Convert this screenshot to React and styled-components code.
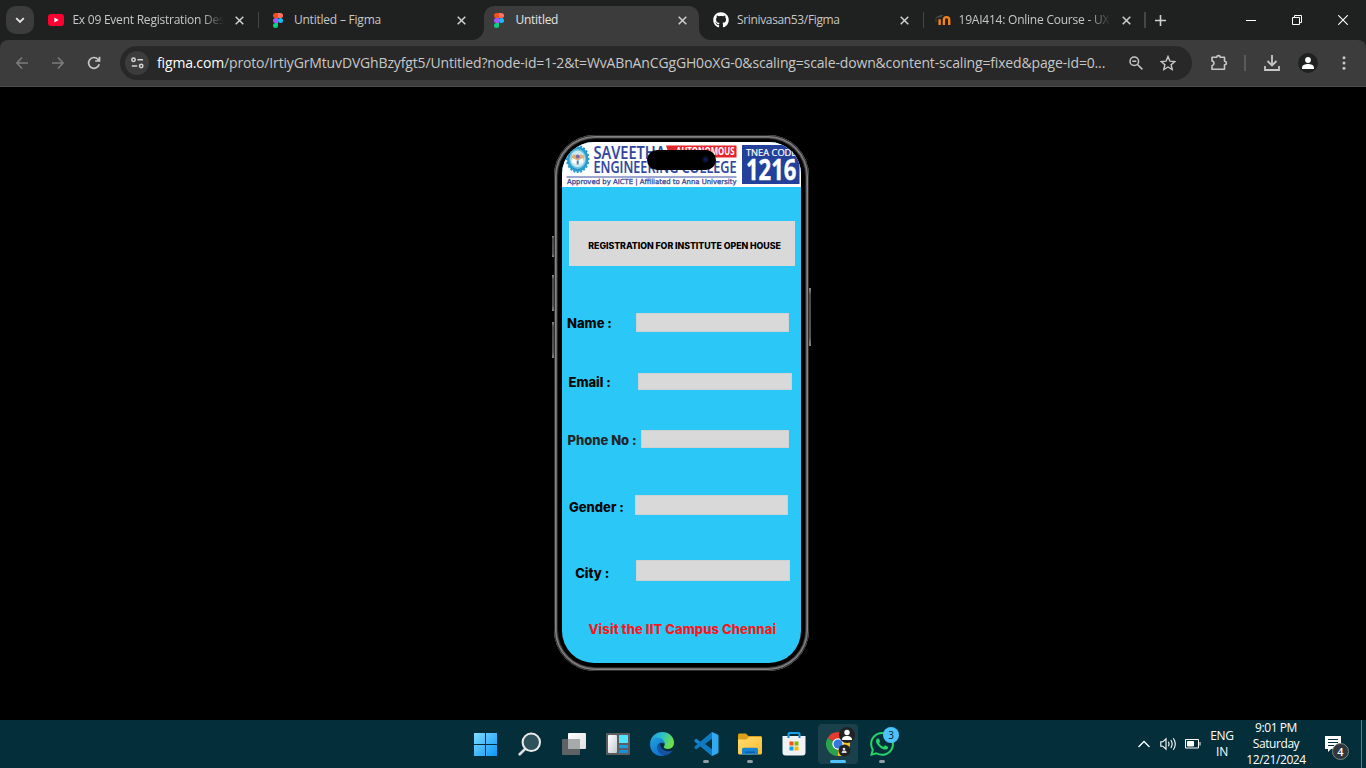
import React from 'react';
import styled, { createGlobalStyle } from 'styled-components';
import { FaGithub } from 'react-icons/fa';

const ui = `"Open Sans", "Noto Sans", sans-serif`;

const Global = createGlobalStyle`
  * { box-sizing: border-box; }
  body { margin: 0; background: #000; font-family: ${ui}; overflow: hidden; }
  svg { display: block; flex: none; }
`;

const Desktop = styled.div`
  width: 1366px;
  height: 768px;
  display: flex;
  flex-direction: column;
  background: #000;
`;

/* ---------- tab strip ---------- */
const TabStrip = styled.div`
  height: 40px;
  display: flex;
  align-items: center;
  padding-left: 6px;
  background: #1f2120;
`;

const TabSearch = styled.div`
  width: 28px;
  height: 28px;
  margin-right: 6.4px;
  border-radius: 10px;
  background: #3c3c3c;
  display: grid;
  place-items: center;
`;

const Tab = styled.div`
  position: relative;
  width: 215px;
  height: 40px;
  display: flex;
  align-items: center;
  padding-left: 8px;
  color: ${(p) => (p.$active ? '#e3e3e3' : '#c7c7c7')};
`;

const ActiveShape = styled.svg`
  position: absolute;
  left: -11.5px;
  top: 0;
`;

const Favicon = styled.div`
  position: relative;
  width: 16px;
  height: 16px;
  display: grid;
  place-items: center;
  margin-right: 8px;
`;

const TabTitle = styled.div`
  position: relative;
  width: 152px;
  height: 18px;
  line-height: 18px;
  font-size: 12px;
  letter-spacing: ${(p) => p.$track || 0}px;
  white-space: nowrap;
  overflow: hidden;
  ${(p) => p.$fade && 'mask-image: linear-gradient(90deg, #000 130px, transparent 152px);'}
`;

const TabClose = styled.div`
  position: relative;
  width: 16px;
  height: 16px;
  margin-left: 7.5px;
  display: grid;
  place-items: center;
`;

const TabGap = styled.div`
  width: 6.55px;
  height: 16px;
  display: flex;
  justify-content: center;
  flex: none;
  &::before {
    content: '';
    width: 1.5px;
    background: ${(p) => (p.$line ? '#454746' : 'transparent')};
  }
`;

const NewTab = styled.div`
  width: 28px;
  margin-left: -1.5px;
  display: grid;
  place-items: center;
`;

const WindowControls = styled.div`
  margin-left: auto;
  display: flex;
`;

const WindowButton = styled.div`
  width: 46px;
  height: 40px;
  display: grid;
  place-items: center;
`;

/* ---------- toolbar ---------- */
const ToolbarBack = styled.div`
  background: #1f2120;
`;

const Toolbar = styled.div`
  height: 47px;
  display: flex;
  align-items: center;
  padding: 0 0 0 5px;
  background: #3c3c3c;
  border-bottom: 1px solid #4b4b4b;
  border-radius: 8px 8px 0 0;
`;

const ToolButton = styled.div`
  width: ${(p) => p.$w || 36}px;
  height: 34px;
  flex: none;
  display: grid;
  place-items: center;
`;

const NavButton = styled(ToolButton)`
  margin-left: -1px;
  margin-right: 1px;
`;

const AddressBar = styled.div`
  width: 1072px;
  height: 34px;
  flex: none;
  margin-left: 7px;
  padding: 0 8px 0 5px;
  border-radius: 17px;
  background: #282828;
  display: flex;
  align-items: center;
`;

const SiteInfo = styled.div`
  width: 24px;
  height: 24px;
  flex: none;
  border-radius: 50%;
  background: #3c3c3c;
  display: grid;
  place-items: center;
`;

const Url = styled.div`
  width: 963px;
  flex: none;
  margin-left: 8px;
  font-size: 14px;
  line-height: 20px;
  letter-spacing: -0.152px;
  white-space: nowrap;
  color: #c7c7c7;
`;

const UrlHost = styled.span`
  color: #fff;
`;

const ToolDivider = styled.div`
  width: 2px;
  height: 16px;
  margin: 0 8px 0 -1px;
  background: #5a5a5a;
`;

const Avatar = styled.div`
  width: 20px;
  height: 20px;
  border-radius: 50%;
  background: #1f2120;
  display: grid;
  place-items: center;
`;

/* ---------- prototype ---------- */
const Stage = styled.main`
  height: 633px;
  display: flex;
  justify-content: center;
  padding: 48px 3px 0 0;
  background: #000;
`;

const Phone = styled.div`
  position: relative;
  width: 255px;
  height: 536px;
  padding: 7px 8px 8px;
  border-radius: 41px;
  background: #000;
  box-shadow: inset 0 0 0 1px #2e2e2e, inset 0 0 0 2px #858585, inset 0 0 0 3px #686868, inset 0 0 0 4px #262626;
`;

const SideKey = styled.i`
  position: absolute;
  ${(p) => p.$side}: -2px;
  top: ${(p) => p.$top}px;
  width: 2px;
  height: ${(p) => p.$h}px;
  background: linear-gradient(#888, #4a4a4a 12%, #555 85%, #888);
`;

const Screen = styled.div`
  width: 239px;
  height: 521px;
  border-radius: 32px;
  overflow: hidden;
  background: #2bc8f7;
  font-family: Inter, sans-serif;
  font-weight: 700;
`;

const Banner = styled.div`
  position: relative;
  height: 45px;
  background: #fff;
`;

const Island = styled.div`
  position: absolute;
  left: 85px;
  top: 8px;
  width: 69px;
  height: 20px;
  border-radius: 10px;
  background: #000;
  &::after {
    content: '';
    position: absolute;
    right: 7px;
    top: 6px;
    width: 7px;
    height: 7px;
    border-radius: 50%;
    background: radial-gradient(#17206a, #05050f 75%);
  }
`;

const Heading = styled.h1`
  width: 226px;
  height: 44.5px;
  margin: 34px 0 0 7px;
  padding: 4.5px 0 0 19.3px;
  display: flex;
  align-items: center;
  background: #d9d9d9;
  font-size: 8.8px;
  font-weight: 800;
  letter-spacing: -0.045px;
  white-space: nowrap;
`;

const Field = styled.label`
  height: ${(p) => p.$h}px;
  margin-top: ${(p) => p.$gap}px;
  padding-left: ${(p) => p.$x}px;
  display: flex;
  align-items: center;
  color: ${(p) => p.$color || '#050505'};
  font-size: 13px;
  font-weight: 800;
  letter-spacing: -0.01px;
  white-space: nowrap;
`;

const FieldLabel = styled.span`
  width: ${(p) => p.$w}px;
  flex: none;
  padding-top: ${(p) => p.$drop || 0}px;
`;

const FieldBox = styled.span`
  width: ${(p) => p.$w}px;
  height: 100%;
  background: #d9d9d9;
  box-shadow: inset 0 0 0 0.5px #c4ccd0;
`;

const Footer = styled.p`
  margin: 39.5px 0 0 26.5px;
  font-size: 13px;
  font-weight: 800;
  line-height: 17px;
  letter-spacing: 0.08px;
  color: #f5191d;
  white-space: nowrap;
`;

/* ---------- taskbar ---------- */
const Taskbar = styled.footer`
  height: 48px;
  display: flex;
  padding-left: 464px;
  background: #042f3a;
  color: #fff;
`;

const TaskItem = styled.div`
  position: relative;
  width: 44px;
  height: 48px;
  display: grid;
  place-items: center;
  &::before {
    content: '';
    position: absolute;
    inset: 4px 2px;
    border-radius: 4px;
    background: ${(p) => (p.$active ? '#1a414b' : 'transparent')};
  }
  &::after {
    content: '';
    position: absolute;
    bottom: 5px;
    left: 50%;
    transform: translateX(-50%);
    width: ${(p) => (p.$active ? 16 : p.$running ? 6 : 0)}px;
    height: 3px;
    border-radius: 2px;
    background: ${(p) => (p.$active ? '#4cc2ff' : '#8e9ea4')};
  }
  svg { position: relative; }
`;

const CountBadge = styled.span`
  position: absolute;
  top: 7px;
  right: 5px;
  width: 16px;
  height: 16px;
  border-radius: 50%;
  background: #4cc2ff;
  color: #06222c;
  font-size: 10px;
  line-height: 16px;
  text-align: center;
`;

const Tray = styled.div`
  margin-left: auto;
  display: flex;
  align-items: center;
  font-size: 12px;
  text-align: center;
`;

const TrayIcon = styled.div`
  width: ${(p) => p.$w}px;
  display: grid;
  place-items: center;
`;

const TrayText = styled.div`
  width: ${(p) => p.$w}px;
  line-height: 16px;
  white-space: nowrap;
  letter-spacing: ${(p) => p.$track}px;
`;

const Notice = styled.div`
  position: relative;
  width: 48px;
  height: 48px;
  padding-right: 8px;
  display: grid;
  place-items: center;
`;

const NoticeCount = styled.span`
  position: absolute;
  left: 19px;
  top: 23px;
  width: 17px;
  height: 17px;
  border: 1px solid #7a858a;
  border-radius: 50%;
  background: #30373a;
  font-size: 11px;
  font-weight: 600;
  line-height: 15px;
`;

const ShowDesktop = styled.div`
  width: 5px;
  height: 48px;
  border-left: 1px solid #5d7a83;
`;

/* ---------- drawings ---------- */
const Cross = () => (
  <svg width="9" height="9" viewBox="0 0 9 9" stroke="#d0d0d0" strokeWidth="1.5">
    <path d="M.7.7l7.600 7.600M8.300.7L.7 8.300" />
  </svg>
);

const YouTube = () => (
  <svg width="16" height="12" viewBox="0 0 16 12">
    <rect width="16" height="12" rx="3" fill="#ff0033" />
    <path d="M6.400 3.500v5L10.600 6z" fill="#fff" />
  </svg>
);

const Figma = () => (
  <svg width="10" height="15" viewBox="0 0 10 15">
    <path d="M2.500 0H5v5H2.500a2.500 2.500 0 010-5z" fill="#f24e1e" />
    <path d="M5 0h2.500a2.500 2.500 0 010 5H5z" fill="#ff7262" />
    <path d="M2.500 5H5v5H2.500a2.500 2.500 0 010-5z" fill="#a259ff" />
    <circle cx="7.500" cy="7.500" r="2.500" fill="#1abcfe" />
    <path d="M2.500 10H5v2.500A2.500 2.500 0 112.500 10z" fill="#0acf83" />
  </svg>
);

const Moodle = () => (
  <svg width="16" height="12" viewBox="0 0 16 12" fill="none">
    <path d="M0 3.700L6 .8l2.500.6-3 2.200z" fill="#514b48" />
    <path d="M1 4v4" stroke="#61483a" strokeWidth=".8" />
    <path d="M4.600 11V5.200M8.900 11V5.800a2.600 2.600 0 015.300 0V11" stroke="#f58220" strokeWidth="2.400" />
  </svg>
);

const tabs = [
  { title: 'Ex 09 Event Registration Design', icon: <YouTube />, line: true, fade: true, track: -0.23 },
  { title: 'Untitled – Figma', icon: <Figma />, track: -0.22 },
  { title: 'Untitled', icon: <Figma />, active: true, track: -0.26 },
  { title: 'Srinivasan53/Figma', icon: <FaGithub size={16} color="#fff" />, line: true, track: -0.35 },
  { title: '19AI414: Online Course - UX Design', icon: <Moodle />, line: true, fade: true, track: -0.23 },
];

const fields = [
  { label: 'Name :', x: 5, w: 69, box: 153, h: 18.5, gap: 47.5, drop: 1 },
  { label: 'Email :', x: 6.5, w: 69.5, box: 153.5, h: 17.5, gap: 41, drop: 1 },
  { label: 'Phone No :', x: 5.5, w: 73.5, box: 148, h: 18, gap: 40, drop: 1, color: '#202427' },
  { label: 'Gender :', x: 7, w: 66, box: 153, h: 19.5, gap: 47, drop: 4 },
  { label: 'City :', x: 13.2, w: 60.8, box: 154, h: 21, gap: 45.5, drop: 5 },
];

const gearTeeth = Array.from({ length: 20 }, (_, i) => i * 18);

const CollegeBanner = () => (
  <svg width="239" height="45" viewBox="0 0 239 45">
    <g transform="translate(15.700 17)">
      <g transform="scale(.84 1)">
        {gearTeeth.map((a) => (
          <rect key={a} x="-1.200" y="-14" width="2.400" height="4" fill="#2c9ccb" transform={`rotate(${a})`} />
        ))}
        <circle r="12.600" fill="#2a9bcd" />
        <circle r="10" fill="#6fc6e0" />
      </g>
      <ellipse rx="7.300" ry="8.300" fill="#cfe9ee" />
      <path d="M-6.500-3.500l3.500-1 3 2 3-2 3.500 1v3.500l-3 4-3.500 2-3.500-2-3-4z" fill="#d9b27c" />
      <path d="M-5.500-1L0 1.500 5.500-1v4.500L0 6l-5.500-2.500z" fill="#fbfdfd" />
      <circle cy="-2.500" r="2" fill="#7f6ab0" />
      <path d="M-1 1.500h2v4h-2z" fill="#4a7fb8" />
    </g>
    <g fill="#2f469c" fontFamily="'Open Sans', sans-serif" fontWeight="600" stroke="#2f469c" strokeWidth=".15">
      <text x="31.500" y="17" fontSize="18" textLength="72" lengthAdjust="spacingAndGlyphs">SAVEETHA</text>
      <text x="31.500" y="31" fontSize="16.500" textLength="143" lengthAdjust="spacingAndGlyphs">ENGINEERING COLLEGE</text>
    </g>
    <path d="M104 3.500h70.500v12H108z" fill="#e4252b" />
    <text x="114" y="13.300" fill="#fff" fontFamily="'Open Sans', sans-serif" fontWeight="700" fontSize="10" textLength="58.500" lengthAdjust="spacingAndGlyphs">AUTONOMOUS</text>
    <rect x="4.500" y="34.500" width="170" height="1" fill="#3c51a2" />
    <text x="5" y="41.500" fill="#39499a" fontFamily="'DejaVu Sans', sans-serif" fontWeight="400" fontSize="7" textLength="169.500" lengthAdjust="spacingAndGlyphs" stroke="#39499a" strokeWidth=".3">Approved by AICTE | Affiliated to Anna University</text>
    <rect x="180" y="3" width="57.500" height="39" fill="#23409a" />
    <text x="184" y="13.500" fill="#fff" fontFamily="'Open Sans', sans-serif" fontWeight="400" fontSize="9.200" textLength="50.500" lengthAdjust="spacingAndGlyphs" stroke="#fff" strokeWidth=".2">TNEA CODE</text>
    <text x="184" y="37.700" fill="#fff" fontFamily="'Open Sans', sans-serif" fontWeight="700" fontSize="28" textLength="50.500" lengthAdjust="spacingAndGlyphs" stroke="#fff" strokeWidth=".4">1216</text>
  </svg>
);

const WindowsLogo = () => (
  <svg width="24" height="24" viewBox="0 0 24 24">
    <defs>
      <linearGradient id="win" x1="0" y1="0" x2="1" y2="1">
        <stop stopColor="#7fdcff" /><stop offset="1" stopColor="#0c96f5" />
      </linearGradient>
    </defs>
    <path d="M0 1h11v11H0zM12 1h11v11H12zM0 13h11v11H0zM12 13h11v11H12z" fill="url(#win)" />
  </svg>
);

const SearchIcon = () => (
  <svg width="24" height="24" viewBox="0 0 24 24" fill="none">
    <path d="M1.700 22.300l5.800-5.700" stroke="#dcdcdc" strokeWidth="2.700" strokeLinecap="round" />
    <circle cx="13.300" cy="10.300" r="8.700" fill="#2e525c" stroke="#ececec" strokeWidth="2" />
  </svg>
);

const TaskView = () => (
  <svg width="24" height="24" viewBox="0 0 24 24">
    <defs><linearGradient id="tv" x2="1" y2="1"><stop stopColor="#fff" /><stop offset="1" stopColor="#dedede" /></linearGradient></defs>
    <rect x="6" y="1" width="18" height="16" rx="1" fill="url(#tv)" />
    <rect y="7" width="18" height="16" rx="1" fill="#5f6265" />
    <rect x="6" y="7" width="12" height="10" fill="#a7a9aa" />
  </svg>
);

const Widgets = () => (
  <svg width="24" height="24" viewBox="0 0 24 24">
    <defs><linearGradient id="wd" x2="1" y2="1"><stop stopColor="#fff" /><stop offset="1" stopColor="#c4cad2" /></linearGradient></defs>
    <rect y="1" width="24" height="22" rx="1" fill="#5b5d60" />
    <rect x="2" y="3" width="9" height="18" rx="1" fill="url(#wd)" />
    <rect x="13" y="3" width="9" height="8" rx=".6" fill="#50e6ff" />
    <rect x="13" y="13" width="9" height="3" rx=".6" fill="#1b9de2" />
    <rect x="13" y="18" width="9" height="3" rx=".6" fill="#1490df" />
  </svg>
);

const Edge = () => (
  <svg width="24" height="24" viewBox="0 0 24 24">
    <defs>
      <linearGradient id="ed1" x1="0" y1="0" x2="1" y2=".4"><stop stopColor="#2696dd" /><stop offset=".5" stopColor="#2bc1c8" /><stop offset="1" stopColor="#6be04b" /></linearGradient>
      <linearGradient id="ed2" x1="0" y1="0" x2=".6" y2="1"><stop stopColor="#1fa5e4" /><stop offset="1" stopColor="#1270cc" /></linearGradient>
    </defs>
    <path d="M.2 10.800C1 4.300 5.900 0 12.200 0 19 0 24 4.900 24 10.700c0 3.900-2.700 6.200-6 6.200-3 0-4.300-1.100-4.300-1.900 0-.6 1-1 1-3 0-2.200-2.300-4.600-6.500-4.600-3.900 0-6.700 1.400-8 3.400z" fill="url(#ed1)" />
    <path d="M.2 11.500C.6 7.500 3.700 5.300 7.300 5.500c4.100.1 7.200 2.600 7.400 6.300C9.300 8.600 5.500 14 9 19c1.600 2.400 3.400 3.900 5.700 4.500C7.500 25.600-.6 20.300.2 11.500z" fill="url(#ed2)" />
    <path d="M10.400 10.400c-3.600 1.800-4.100 6.600-1.300 10.100 2.300 2.900 5.300 3.400 8.300 2.200 2.300-.9 4.200-2.500 5.200-4.300-3.700 1.800-8.700.6-10.700-1.700-1.600-2-2.300-4.300-1.500-6.300z" fill="#1554a5" />
  </svg>
);

const VsCode = () => (
  <svg width="25" height="24" viewBox="0 0 25 24">
    <path d="M18 0L7 10.200 2.400 6.700.5 7.700v1.900L18 24l1-6z" fill="#1685cf" />
    <path d="M18 24L7 13.800l-4.600 3.500-1.900-1v-1.900L18 0l1 6z" fill="#0f79c2" />
    <path d="M18 0l5.600 2.600c.5.200.9.7.9 1.300v16.200c0 .6-.4 1.100-.9 1.300L18 24z" fill="#32a9ed" />
    <path d="M18 6.700V17.300L11 12z" fill="#042f3a" />
  </svg>
);

const Folder = () => (
  <svg width="24" height="24" viewBox="0 0 24 24">
    <defs><linearGradient id="fo" x2="1" y2="1"><stop stopColor="#ffdc70" /><stop offset="1" stopColor="#fdbd2e" /></linearGradient></defs>
    <path d="M0 3.200C0 2.300.7 1.600 1.600 1.600h6.200L10.500 4h12c.8 0 1.500.7 1.500 1.500V12H0z" fill="#dda018" />
    <path d="M0 7.500h8.300L11 5h11.500c.8 0 1.500.7 1.500 1.500V21c0 .8-.7 1.500-1.500 1.500h-21C.7 22.500 0 21.800 0 21z" fill="url(#fo)" />
    <path d="M4 22.500v-5c0-1 .8-1.800 1.800-1.800h12.400c1 0 1.800.8 1.800 1.800v5z" fill="#1584d3" />
    <path d="M7 19.500h10v1.500H7z" fill="#0c5da8" />
  </svg>
);

const Store = () => (
  <svg width="24" height="24" viewBox="0 0 24 24">
    <path d="M6.500 6V2c0-.6.4-1 1-1h9c.6 0 1 .4 1 1v4" fill="none" stroke="#1aa0e6" strokeWidth="2" />
    <path d="M.5 4h23v16.500a3 3 0 01-3 3h-17a3 3 0 01-3-3z" fill="#f1f2f3" />
    <path d="M5.500 4h2v2h-2zM16.500 4h2v2h-2z" fill="#1684c8" />
    <path d="M7.500 9.500h4v4h-4z" fill="#f25022" /><path d="M12.500 9.500h4v4h-4z" fill="#7fba00" />
    <path d="M7.500 14.500h4v4h-4z" fill="#00a4ef" /><path d="M12.500 14.500h4v4h-4z" fill="#ffb900" />
  </svg>
);

const Chrome = () => (
  <svg width="36" height="36" viewBox="0 0 36 36">
    <path d="M18 18L7.600 12A12 12 0 0128.400 12z" fill="#e33b2e" />
    <path d="M18 18V30A12 12 0 017.600 12z" fill="#2ba24c" />
    <path d="M18 18l10.400-6A12 12 0 0118 30z" fill="#fcc31e" />
    <circle cx="18" cy="18" r="5.700" fill="#fff" /><circle cx="18" cy="18" r="4.500" fill="#3478dc" />
    <circle cx="27" cy="9" r="8" fill="#202224" />
    <circle cx="27" cy="6.500" r="2.700" fill="#fff" />
    <path d="M22 14c0-3 2-4 5-4s5 1 5 4z" fill="#fff" />
    <circle cx="24.500" cy="24.500" r="6" fill="#202224" />
    <circle cx="24" cy="23" r="1.300" fill="#ddd" /><path d="M21.700 27c0-2 1-2.400 2.500-2.400s2.500.4 2.500 2.400z" fill="#ddd" />
  </svg>
);

const WhatsApp = () => (
  <svg width="24" height="24" viewBox="0 0 24 24" fill="#25d366">
    <path d="M17.472 14.382c-.297-.149-1.758-.867-2.030-.967-.273-.099-.471-.148-.670.150-.197.297-.767.966-.940 1.164-.173.199-.347.223-.644.075-.297-.150-1.255-.463-2.390-1.475-.883-.788-1.480-1.761-1.653-2.059-.173-.297-.018-.458.130-.606.134-.133.298-.347.446-.520.149-.174.198-.298.298-.497.099-.198.050-.371-.025-.520-.075-.149-.669-1.612-.916-2.207-.242-.579-.487-.500-.669-.510-.173-.008-.371-.010-.570-.010-.198 0-.520.074-.792.372-.272.297-1.040 1.016-1.040 2.479 0 1.462 1.065 2.875 1.213 3.074.149.198 2.096 3.200 5.077 4.487.709.306 1.262.489 1.694.625.712.227 1.360.195 1.871.118.571-.085 1.758-.719 2.006-1.413.248-.694.248-1.289.173-1.413-.074-.124-.272-.198-.570-.347m-5.421 7.403h-.004a9.870 9.870 0 01-5.031-1.378l-.361-.214-3.741.982.998-3.648-.235-.374a9.860 9.860 0 01-1.510-5.260c.001-5.450 4.436-9.884 9.888-9.884 2.640 0 5.122 1.030 6.988 2.898a9.825 9.825 0 012.893 6.994c-.003 5.450-4.437 9.884-9.885 9.884m8.413-18.297A11.815 11.815 0 0012.050 0C5.495 0 .160 5.335.157 11.892c0 2.096.547 4.142 1.588 5.945L.057 24l6.305-1.654a11.882 11.882 0 005.683 1.448h.005c6.554 0 11.890-5.335 11.893-11.893a11.821 11.821 0 00-3.480-8.413z" />
  </svg>
);

export default function App() {
  return (
    <Desktop>
      <Global />
      <TabStrip>
        <TabSearch>
          <svg width="10" height="7" viewBox="0 0 10 7" fill="none" stroke="#e3e3e3" strokeWidth="1.900"><path d="M1.200 1.200L5 5l3.800-3.800" /></svg>
        </TabSearch>
        {tabs.map((t, i) => (
          <React.Fragment key={i}>
            <Tab $active={t.active}>
              {t.active && (
                <ActiveShape width="239" height="40" viewBox="0 0 239 40">
                  <path d="M0 40a12 12 0 0012-12V16A10 10 0 0122 6h195a10 10 0 0110 10v12a12 12 0 0012 12z" fill="#3c3c3c" />
                </ActiveShape>
              )}
              <Favicon>{t.icon}</Favicon>
              <TabTitle $fade={t.fade} $track={t.track}>{t.title}</TabTitle>
              <TabClose><Cross /></TabClose>
            </Tab>
            <TabGap $line={t.line} />
          </React.Fragment>
        ))}
        <NewTab>
          <svg width="11" height="11" viewBox="0 0 11 11" stroke="#d0d0d0" strokeWidth="1.600"><path d="M5.500 0v11M0 5.500h11" /></svg>
        </NewTab>
        <WindowControls>
          <WindowButton><svg width="10" height="10" viewBox="0 0 10 10" stroke="#fff"><path d="M0 5.500h10" /></svg></WindowButton>
          <WindowButton><svg width="10" height="10" viewBox="0 0 10 10" fill="none" stroke="#fff"><path d="M.5 2.500h7v7h-7zM2.500 2.500v-2h7v7h-2" /></svg></WindowButton>
          <WindowButton><svg width="10" height="10" viewBox="0 0 10 10" stroke="#fff" strokeWidth="1.100"><path d="M.2.2l9.600 9.600M9.800.2L.2 9.800" /></svg></WindowButton>
        </WindowControls>
      </TabStrip>

      <ToolbarBack>
        <Toolbar>
          <NavButton><svg width="12" height="12" viewBox="0 0 12 12" fill="none" stroke="#7c7c7c" strokeWidth="1.500"><path d="M6 .6L.9 6 6 11.400M1 6h11" /></svg></NavButton>
          <NavButton><svg width="12" height="12" viewBox="0 0 12 12" fill="none" stroke="#7c7c7c" strokeWidth="1.500"><path d="M6 .6L11.100 6 6 11.400M11 6H0" /></svg></NavButton>
          <NavButton><svg width="14" height="14" viewBox="0 0 14 14" fill="none" stroke="#c7c7c7" strokeWidth="1.700"><path d="M12.200 8.300A5.400 5.400 0 1111 3.300L12.400 5M12.500.7V5H8.200" /></svg></NavButton>
          <AddressBar>
            <SiteInfo>
              <svg width="13" height="12" viewBox="0 0 13 12" fill="none" stroke="#d5d5d5" strokeWidth="1.500"><circle cx="2.500" cy="2.700" r="1.700" /><path d="M6.500 2.700H12M.8 9H6.200" /><circle cx="10.200" cy="9" r="1.700" /></svg>
            </SiteInfo>
            <Url><UrlHost>figma.com</UrlHost>/proto/IrtiyGrMtuvDVGhBzyfgt5/Untitled?node-id=1-2&amp;t=WvABnAnCGgGH0oXG-0&amp;scaling=scale-down&amp;content-scaling=fixed&amp;page-id=0...</Url>
            <ToolButton $w={32}>
              <svg width="14" height="14" viewBox="0 0 14 14" fill="none" stroke="#c7c7c7" strokeWidth="1.500"><circle cx="5.300" cy="5.300" r="4.300" /><path d="M8.500 8.500l4.900 4.900M3.300 5.300h4" /></svg>
            </ToolButton>
            <ToolButton $w={32}>
              <svg width="16" height="16" viewBox="0 0 16 16" fill="none" stroke="#c7c7c7" strokeWidth="1.400"><path d="M8 1.500l1.900 4.600 4.900.4-3.700 3.200 1.100 4.800L8 12l-4.200 2.500 1.100-4.800-3.700-3.200 4.900-.4z" /></svg>
            </ToolButton>
          </AddressBar>
          <ToolButton $w={53}>
            <svg width="18" height="18" viewBox="0 0 18 18" fill="none" stroke="#c7c7c7" strokeWidth="1.600"><path d="M2 3.300h4.800c0-2.200 3.400-2.200 3.400 0h4.300v4c2.500 0 2.500 3.400 0 3.400v4.500H2v-3.500c2.700-.6 2.700-4.200 0-4.800z" strokeLinejoin="round" /></svg>
          </ToolButton>
          <ToolDivider />
          <ToolButton>
            <svg width="16" height="16" viewBox="0 0 16 16" fill="none" stroke="#c7c7c7" strokeWidth="1.800"><path d="M8 0v10M3.500 6L8 10.500 12.500 6M1 11v4h14v-4" /></svg>
          </ToolButton>
          <ToolButton>
            <Avatar><svg width="12" height="12" viewBox="0 0 12 12" fill="#fff"><circle cx="6" cy="3" r="2.900" /><path d="M0 12v-1.500C0 8 3.500 7 6 7s6 1 6 3.500V12z" /></svg></Avatar>
          </ToolButton>
          <ToolButton>
            <svg width="4" height="14" viewBox="0 0 4 14" fill="#c7c7c7"><circle cx="2" cy="1.700" r="1.500" /><circle cx="2" cy="7" r="1.500" /><circle cx="2" cy="12.300" r="1.500" /></svg>
          </ToolButton>
        </Toolbar>
      </ToolbarBack>

      <Stage>
        <Phone>
          <SideKey $side="left" $top={101} $h={21} />
          <SideKey $side="left" $top={140} $h={36} />
          <SideKey $side="left" $top={187} $h={36} />
          <SideKey $side="right" $top={153} $h={58} />
          <Screen>
            <Banner><CollegeBanner /><Island /></Banner>
            <Heading>REGISTRATION FOR INSTITUTE OPEN HOUSE</Heading>
            {fields.map((f) => (
              <Field key={f.label} $x={f.x} $h={f.h} $gap={f.gap} $color={f.color}>
                <FieldLabel $w={f.w} $drop={f.drop}>{f.label}</FieldLabel>
                <FieldBox $w={f.box} />
              </Field>
            ))}
            <Footer>Visit the IIT Campus Chennai</Footer>
          </Screen>
        </Phone>
      </Stage>

      <Taskbar>
        <TaskItem><WindowsLogo /></TaskItem>
        <TaskItem><SearchIcon /></TaskItem>
        <TaskItem><TaskView /></TaskItem>
        <TaskItem><Widgets /></TaskItem>
        <TaskItem><Edge /></TaskItem>
        <TaskItem $running><VsCode /></TaskItem>
        <TaskItem $running><Folder /></TaskItem>
        <TaskItem><Store /></TaskItem>
        <TaskItem $active><Chrome /></TaskItem>
        <TaskItem $running><WhatsApp /><CountBadge>3</CountBadge></TaskItem>
        <Tray>
          <TrayIcon $w={24}><svg width="12" height="8" viewBox="0 0 12 8" fill="none" stroke="#fff" strokeWidth="1.300"><path d="M.5 7L6 1.500 11.500 7" /></svg></TrayIcon>
          <TrayIcon $w={24}><svg width="17" height="14" viewBox="0 0 17 14" fill="none" stroke="#fff" strokeWidth="1.100"><path d="M.8 4.800h2L6 1.800v10.400l-3.200-3h-2zM8.300 4.800q1.500 2.200 0 4.400M10.800 3q2.700 4 0 8M13.300 1.300q4 5.700 0 11.400" /></svg></TrayIcon>
          <TrayIcon $w={25}><svg width="16" height="10" viewBox="0 0 16 10" fill="none" stroke="#fff"><path d="M.5.500h13v8.500H.500zM15 3v3.500" /><path d="M2.500 2.500h6v4.500h-6z" fill="#fff" /></svg></TrayIcon>
          <TrayText $w={34} $track={-0.3}>ENG<br />IN</TrayText>
          <TrayText $w={74} $track={-0.42}>9:01 PM<br />Saturday<br />12/21/2024</TrayText>
          <Notice>
            <svg width="16" height="17" viewBox="0 0 16 17"><path d="M0 0h16v13H6l-3 3v-3H0z" fill="#fff" /><path d="M3 3.500h10M3 6.500h10M3 9.500h6" stroke="#042f3a" /></svg>
            <NoticeCount>4</NoticeCount>
          </Notice>
          <ShowDesktop />
        </Tray>
      </Taskbar>
    </Desktop>
  );
}
